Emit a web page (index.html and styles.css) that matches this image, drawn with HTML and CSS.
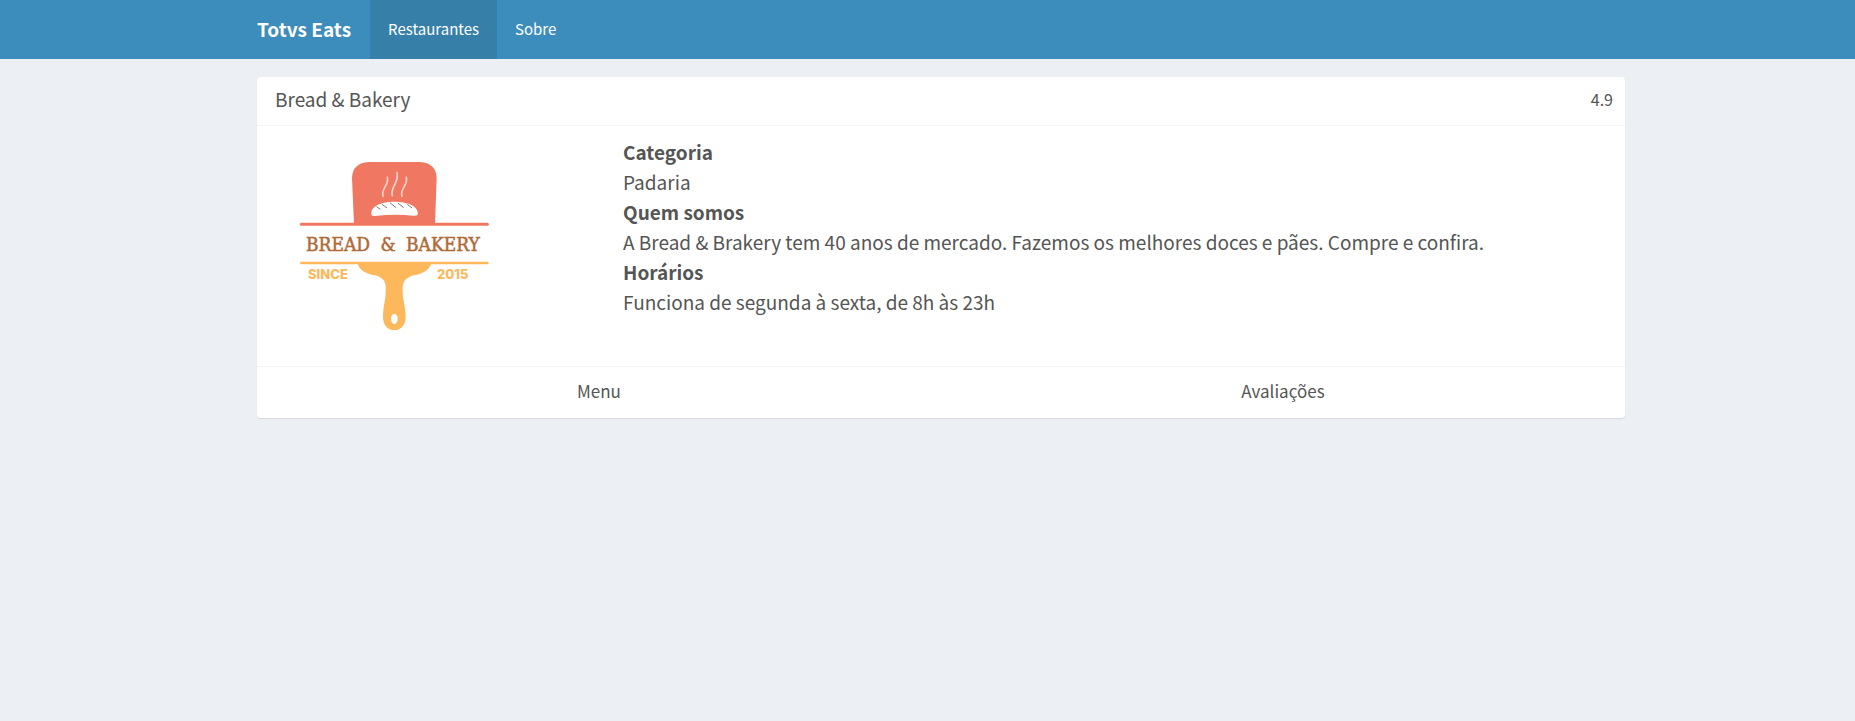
FILE: index.html
```html
<!DOCTYPE html>
<html lang="pt-BR">
<head>
<meta charset="utf-8">
<title>Totvs Eats</title>
<link rel="stylesheet" href="styles.css">
</head>
<body>
<header class="navbar">
  <a class="brand" href="#">Totvs Eats</a>
  <nav class="nav">
    <a class="nav-link active" href="#">Restaurantes</a>
    <a class="nav-link" href="#">Sobre</a>
  </nav>
</header>
<main class="content">
  <article class="box">
    <header class="box-header">
      <h1 class="box-title">Bread &amp; Bakery</h1>
      <span class="rating">4.9</span>
    </header>
    <div class="box-body">
      <div class="picture">
        <svg class="logo" viewBox="286 137 216 216" role="img" aria-label="Bread &amp; Bakery">
          <g transform="translate(280 145) scale(.33333)">
            <path fill="#f07862" d="M222 238L216 98Q218 54 266 51H420Q468 54 470 98L465 238Z"/>
            <path fill="none" stroke="#f07862" stroke-width="9" stroke-linecap="round" d="M64 238H622"/>
            <path fill="none" stroke="#fbd3ca" stroke-width="5" stroke-linecap="round" d="M322 97C328 122 302 130 309 154M351 83C358 116 330 124 337 152M379 97C386 122 358 130 366 154"/>
            <path fill="#fff" d="M275 211C268 186 300 170 343 170S418 186 413 209Q410 213 400 212Q343 206 286 213Q278 214 275 211Z"/>
            <path fill="none" stroke="#777" stroke-width="3" d="M290 185L301 193M306 178L321 189M330 173L348 188M354 174L371 188M382 178L396 189"/>
          </g>
          <g class="logo-name">
            <text x="306" y="251">BREAD</text>
            <text x="388" y="251" text-anchor="middle">&amp;</text>
            <text x="406" y="251">BAKERY</text>
          </g>
          <g transform="translate(280 235) scale(.33333)">
            <path fill="none" stroke="#fdb85c" stroke-width="8" stroke-linecap="round" d="M64 84H622"/>
            <path fill="#fdb85c" fill-rule="evenodd" d="M232 84H454C449 105 426 118 401 121C374 129 367 143 368 164C367 194 377 213 377 246C377 271 361 286 343 286S309 271 309 246C309 213 318 194 317 164C319 143 312 129 286 121C260 118 237 105 232 84ZM343 236C337 236 333 243 333 251S337 267 343 267S353 259 353 251S349 236 343 236Z"/>
          </g>
          <g class="logo-since">
            <text x="308" y="279">SINCE</text>
            <text x="437" y="279">2015</text>
          </g>
        </svg>
      </div>
      <dl class="details">
        <dt>Categoria</dt>
        <dd>Padaria</dd>
        <dt>Quem somos</dt>
        <dd>A Bread &amp; Brakery tem 40 anos de mercado. Fazemos os melhores doces e pães. Compre e confira.</dd>
        <dt>Horários</dt>
        <dd>Funciona de segunda à sexta, de 8h às 23h</dd>
      </dl>
    </div>
    <footer class="tabs">
      <a class="tab" href="#">Menu</a>
      <a class="tab" href="#">Avaliações</a>
    </footer>
  </article>
</main>
</body>
</html>
```
FILE: styles.css
```css
* { box-sizing: border-box; }
body {
  margin: 0;
  min-height: 100vh;
  background: #ecf0f5;
  color: #555;
  font: 15px/30px "Noto Sans CJK SC", "Noto Sans", sans-serif;
}
a { color: inherit; text-decoration: none; }
.navbar {
  display: flex;
  padding: 0 230px 0 257px;
  background: #3c8dbc;
  color: #fff;
  line-height: 57px;
}
.brand { padding: 0 19px 2px 0; font-size: 19px; font-weight: 700; }
.nav { display: flex; }
.nav-link { padding: 0 18px 2px; font-size: 15px; }
.nav-link.active { background: #367fa9; }
.content { padding: 18px 230px 18px 257px; }
.box {
  background: #fff;
  border-radius: 4px;
  box-shadow: 0 1px 1px rgba(0, 0, 0, .1);
}
.box-header {
  display: flex;
  align-items: center;
  justify-content: space-between;
  padding: 7px 12px 11px 18px;
  border-bottom: 1px solid #f4f4f4;
}
.box-title { margin: 0; font-size: 19px; font-weight: 400; }
.rating { font-size: 16px; }
.box-body {
  display: grid;
  grid-template-columns: 25% 1fr;
  gap: 18px;
  padding: 11px 12px 13px;
}
.picture { padding-left: 17px; }
.logo { display: block; width: 216px; height: 216px; }
.logo-name {
  fill: #b06a36;
  stroke: #b06a36;
  stroke-width: .5;
  font: 400 19px "DejaVu Serif Condensed", "DejaVu Serif", serif;
}
.logo-since { fill: #fdb85c; font: 800 13px Inter, sans-serif; }
.details { margin: 0; font-size: 19px; }
.details dt { font-weight: 700; }
.details dd { margin: 0; }
.tabs { display: flex; border-top: 1px solid #f4f4f4; }
.tab { flex: 1; padding: 9px 0 12px; font-size: 17px; text-align: center; }
```
